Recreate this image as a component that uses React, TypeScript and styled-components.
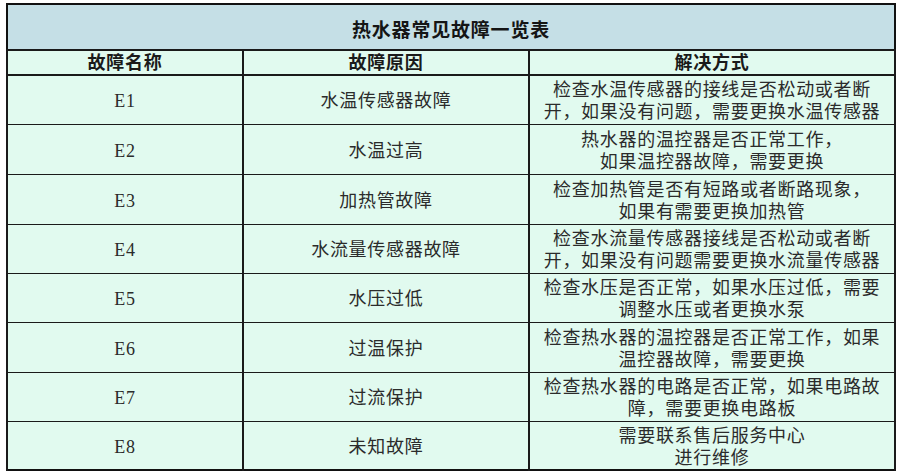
import React from "react";
import styled, { createGlobalStyle } from "styled-components";

const Global = createGlobalStyle`
  html, body { margin: 0; padding: 0; background: #ffffff; }
  body { font-family: "Liberation Serif", "Noto Sans CJK SC", serif; }
`;

const Page = styled.div`
  padding: 3px 0 0 6px;
`;

const Table = styled.table`
  width: 888px;
  table-layout: fixed;
  border-collapse: collapse;
  border: 2px solid #111;
  font-family: "Liberation Serif", "Noto Sans CJK SC", serif;
  color: #2b2b2b;
`;

const Row = styled.tr<{ $h: number }>`
  height: ${(p) => p.$h}px;
`;

const TitleCell = styled.th`
  background: #c5dfe6;
  border-bottom: 2px solid #1a1a1a;
  font-size: 19px;
  font-weight: 700;
  color: #151515;
  letter-spacing: 0.8px;
  text-align: center;
  padding: 2px 0 0;
`;

const HeadCell = styled.th`
  background: #e1faef;
  border: 2px solid #1a1a1a;
  border-top: none;
  font-size: 18px;
  font-weight: 700;
  color: #1a1a1a;
  letter-spacing: 0.7px;
  text-align: center;
  padding: 0;
  line-height: 22px;
`;

const Cell = styled.td`
  background: #e1faef;
  border: 2px solid #1a1a1a;
  border-top-width: 1px;
  border-bottom-width: 1px;
  font-size: 18px;
  letter-spacing: 0.7px;
  line-height: 22px;
  text-align: center;
  vertical-align: middle;
  padding: 3px 0 0;
  white-space: nowrap;
`;

const Line = styled.div`
  display: block;
`;

type Item = { code: string; cause: string; fix: string[]; h: number };

const rows: Item[] = [
  { code: "E1", cause: "水温传感器故障", fix: ["检查水温传感器的接线是否松动或者断", "开，如果没有问题，需要更换水温传感器"], h: 49 },
  { code: "E2", cause: "水温过高", fix: ["热水器的温控器是否正常工作，", "如果温控器故障，需要更换"], h: 50 },
  { code: "E3", cause: "加热管故障", fix: ["检查加热管是否有短路或者断路现象，", "如果有需要更换加热管"], h: 50 },
  { code: "E4", cause: "水流量传感器故障", fix: ["检查水流量传感器接线是否松动或者断", "开，如果没有问题需要更换水流量传感器"], h: 49 },
  { code: "E5", cause: "水压过低", fix: ["检查水压是否正常，如果水压过低，需要", "调整水压或者更换水泵"], h: 49 },
  { code: "E6", cause: "过温保护", fix: ["检查热水器的温控器是否正常工作，如果", "温控器故障，需要更换"], h: 50 },
  { code: "E7", cause: "过流保护", fix: ["检查热水器的电路是否正常，如果电路故", "障，需要更换电路板"], h: 49 },
  { code: "E8", cause: "未知故障", fix: ["需要联系售后服务中心", "进行维修"], h: 49 },
];

export default function App() {
  return (
    <>
      <Global />
      <Page>
        <Table>
          <colgroup>
            <col style={{ width: 236 }} />
            <col style={{ width: 286 }} />
            <col style={{ width: 366 }} />
          </colgroup>
          <thead>
            <Row $h={46}>
              <TitleCell colSpan={3}>热水器常见故障一览表</TitleCell>
            </Row>
            <Row $h={25}>
              <HeadCell>故障名称</HeadCell>
              <HeadCell>故障原因</HeadCell>
              <HeadCell>解决方式</HeadCell>
            </Row>
          </thead>
          <tbody>
            {rows.map((r) => (
              <Row key={r.code} $h={r.h}>
                <Cell>{r.code}</Cell>
                <Cell>{r.cause}</Cell>
                <Cell>
                  {r.fix.map((l) => (
                    <Line key={l}>{l}</Line>
                  ))}
                </Cell>
              </Row>
            ))}
          </tbody>
        </Table>
      </Page>
    </>
  );
}
